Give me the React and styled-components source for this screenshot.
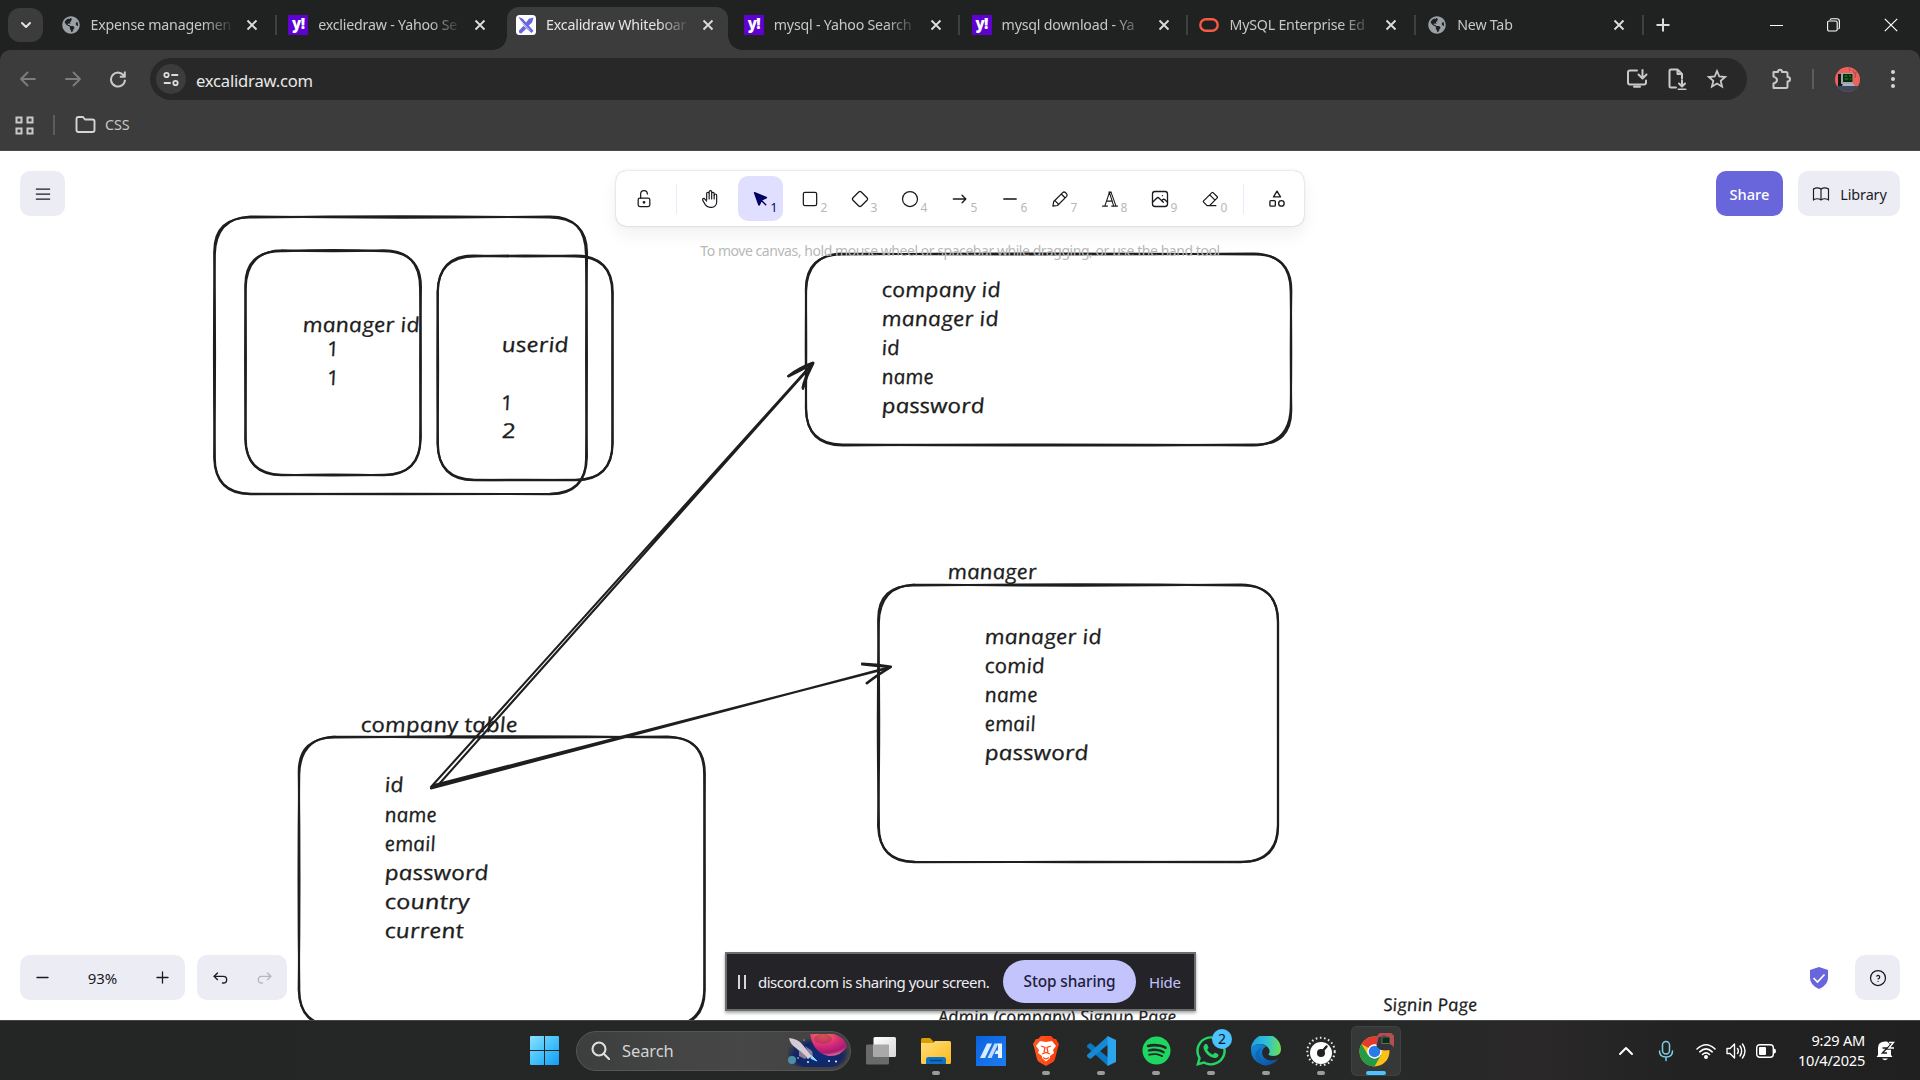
import React from "react";
import styled, { createGlobalStyle, css } from "styled-components";
import { FaGlobeAmericas, FaSpotify, FaWhatsapp } from "react-icons/fa";
import {
  TbLockOpen,
  TbPhoto,
  TbMenu2,
  TbBook,
  TbPlus,
  TbMinus,
  TbArrowBackUp,
  TbArrowForwardUp,
  TbHelpCircle,
} from "react-icons/tb";

const GlobalStyle = createGlobalStyle`
  *, *::before, *::after { box-sizing: border-box; }
  html, body { margin: 0; padding: 0; overflow: hidden; }
  body { font-family: "Noto Sans", "Open Sans", sans-serif; }
  svg { display: block; flex: none; }
`;

const Screen = styled.div`
  width: 1920px;
  height: 1080px;
  display: flex;
  flex-direction: column;
  overflow: hidden;
  background: #fff;
`;

/* ---------- browser chrome ---------- */

const TabStrip = styled.div`
  height: 50px;
  flex: none;
  display: flex;
  align-items: center;
  padding-left: 8px;
  background: #202221;
`;

const TabSearch = styled.div`
  width: 35px;
  height: 34px;
  margin-right: 8.5px;
  border-radius: 12px;
  background: #3c3c3c;
  display: grid;
  place-items: center;
`;

const TabBox = styled.div`
  position: relative;
  width: 220.8px;
  height: 50px;
  padding: 0 8px 0 9px;
  display: flex;
  align-items: center;
  color: ${(p) => (p.$active ? "#e6e6e6" : "#c7c7c7")};
  ${(p) =>
    p.$active &&
    css`
      height: 43px;
      padding-bottom: 7px;
      align-self: flex-end;
      background: #3c3c3c;
      border-radius: 12px 12px 0 0;
      &::before,
      &::after {
        content: "";
        position: absolute;
        bottom: 0;
        width: 14px;
        height: 14px;
      }
      &::before {
        left: -14px;
        background: radial-gradient(circle at 0 0, transparent 13.5px, #3c3c3c 14px);
      }
      &::after {
        right: -14px;
        background: radial-gradient(circle at 100% 0, transparent 13.5px, #3c3c3c 14px);
      }
    `}
`;

const TabTitle = styled.div`
  width: 142px;
  flex: none;
  margin: 0 8px 0 10px;
  white-space: nowrap;
  font-size: 14.2px;
  line-height: 22px;
  letter-spacing: -0.2px;
  mask-image: linear-gradient(90deg, #000 112px, transparent 144px);
`;

const TabClose = styled.div`
  width: 24px;
  height: 24px;
  display: grid;
  place-items: center;
`;

const TabDivider = styled.div`
  width: 2px;
  height: 20px;
  margin: 0 2.5px;
  background: ${(p) => (p.$hidden ? "transparent" : "#3f4040")};
`;

const YahooBadge = styled.div`
  width: 20px;
  height: 20px;
  background: #5f01d1;
  color: #fff;
  font: 800 15px/17px "Open Sans", sans-serif;
  letter-spacing: -0.6px;
  text-align: center;
`;

const NewTab = styled.div`
  width: 30px;
  margin-left: 2px;
  display: grid;
  place-items: center;
`;

const WindowButtons = styled.div`
  margin-left: auto;
  padding-right: 1px;
  display: flex;
  height: 48px;
`;

const WindowButton = styled.div`
  width: 57px;
  display: grid;
  place-items: center;
`;

const BrowserHead = styled.div`
  height: 101px;
  flex: none;
  background: #202221;
`;

const BrowserPanel = styled.div`
  height: 101px;
  padding-top: 8px;
  background: #3c3c3c;
  border-radius: 10px 10px 0 0;
  border-bottom: 1px solid #4a4a4a;
`;

const NavRow = styled.div`
  height: 42px;
  display: flex;
  align-items: center;
  padding-left: 5px;
`;

const NavButton = styled.div`
  width: 45px;
  height: 42px;
  display: grid;
  place-items: center;
`;

const Omnibox = styled.div`
  width: 1597px;
  height: 42px;
  margin-left: 10px;
  padding: 0 10px 0 6px;
  border-radius: 21px;
  background: #282828;
  display: flex;
  align-items: center;
`;

const SiteInfo = styled.div`
  width: 30px;
  height: 30px;
  border-radius: 50%;
  background: #3c3c3c;
  display: grid;
  place-items: center;
`;

const Url = styled.div`
  flex: 1;
  margin-left: 10px;
  padding-top: 2px;
  color: #e8e8e8;
  font-size: 16.6px;
  letter-spacing: -0.2px;
`;

const OmniAction = styled.div`
  width: 40px;
  display: grid;
  place-items: center;
`;

const BarDivider = styled.div`
  width: 2px;
  height: 20px;
  margin-left: ${(p) => p.$gap}px;
  background: #5c5c5c;
`;

const NavTail = styled.div`
  flex: 1;
  display: flex;
  align-items: center;
  padding-left: 22px;
`;

const Avatar = styled.div`
  margin: 0 30px 0 21px;
`;

const Bookmarks = styled.div`
  display: flex;
  align-items: center;
  height: 50px;
  padding-left: 15px;
`;

const Folder = styled.div`
  display: flex;
  align-items: center;
  gap: 9px;
  margin-left: 20px;
  margin-top: -1px;
  color: #c7c7c7;
  font-size: 14.4px;
  letter-spacing: -0.15px;
`;

/* ---------- whiteboard ---------- */

const Board = styled.main`
  position: relative;
  height: 869px;
  flex: none;
  display: flex;
  flex-direction: column;
  justify-content: space-between;
  background: #fff;
  overflow: hidden;
  color: #1b1b1f;
`;

const Drawing = styled.svg`
  position: absolute;
  inset: 0;
`;

const BoardTop = styled.div`
  position: relative;
  display: grid;
  grid-template-columns: 1fr auto 1fr;
  align-items: start;
  padding: 20px;
`;

const BoardBottom = styled.div`
  position: relative;
  display: flex;
  align-items: center;
  padding: 20px;
`;

const SquareButton = styled.div`
  width: 45px;
  height: 45px;
  border-radius: 10px;
  background: #ececf4;
  display: grid;
  place-items: center;
`;

const Centre = styled.div`
  display: flex;
  flex-direction: column;
  align-items: center;
`;

const ToolIsland = styled.div`
  display: flex;
  align-items: center;
  gap: 5px;
  padding: 5px;
  border-radius: 10px;
  background: #fff;
  box-shadow: 0 0 1.2px rgba(0, 0, 0, 0.3), 0 0 4px rgba(0, 0, 0, 0.06), 0 9px 18px rgba(0, 0, 0, 0.06);
`;

const Tool = styled.div`
  width: 45px;
  height: 45px;
  border-radius: 10px;
  display: grid;
  place-items: center;
  position: relative;
  background: ${(p) => (p.$active ? "#e0dfff" : "transparent")};
  color: ${(p) => (p.$active ? "#030064" : "#1b1b1f")};
`;

const ToolKey = styled.span`
  position: absolute;
  right: 5.5px;
  bottom: 6px;
  font-size: 12px;
  line-height: 14px;
  letter-spacing: -0.4px;
  color: ${(p) => (p.$active ? "#030064" : "#b8b8b8")};
`;

const ToolDivider = styled.div`
  width: 1px;
  height: 30px;
  margin: 0 5.25px;
  background: #ebe9fb;
`;

const Hint = styled.div`
  margin-top: 14px;
  font-size: 14px;
  line-height: 22px;
  letter-spacing: -0.45px;
  color: #b8b8b8;
  white-space: nowrap;
`;

const TopActions = styled.div`
  display: flex;
  justify-content: flex-end;
  gap: 15px;
`;

const ShareButton = styled.div`
  width: 67px;
  height: 45px;
  padding-top: 1px;
  border-radius: 10px;
  background: #6965db;
  color: #fff;
  font-size: 14.6px;
  font-weight: 500;
  display: grid;
  place-items: center;
`;

const LibraryButton = styled.div`
  width: 102px;
  height: 45px;
  padding-top: 1px;
  border-radius: 10px;
  background: #ececf4;
  font-size: 14.4px;
  letter-spacing: -0.1px;
  display: flex;
  align-items: center;
  justify-content: center;
  gap: 9px;
`;

const ButtonGroup = styled.div`
  width: ${(p) => p.$width}px;
  height: 45px;
  margin-right: 12px;
  border-radius: 10px;
  background: #ececf4;
  display: flex;
  align-items: center;
  justify-content: space-between;
`;

const GroupCell = styled.div`
  width: 45px;
  display: grid;
  place-items: center;
  opacity: ${(p) => (p.$dim ? 0.25 : 1)};
`;

const ZoomValue = styled.div`
  padding-top: 1px;
  font-size: 15px;
`;

const Shield = styled.div`
  margin: 0 26px 0 auto;
`;

/* Floating window placed over the whiteboard by the browser. */
const ShareBar = styled.div`
  position: absolute;
  left: 725px;
  top: 952px;
  width: 471px;
  height: 59px;
  padding-left: 11px;
  border: 2px solid #6b6d6e;
  background: #232328;
  box-shadow: 0 2px 3px rgba(0, 0, 0, 0.35);
  display: flex;
  align-items: center;
  color: #eeeef2;
  font-size: 15px;
  white-space: nowrap;
`;

const PauseBars = styled.div`
  width: 8px;
  height: 14px;
  margin-right: 12px;
  border: solid #d6d6da;
  border-width: 0 2.5px;
`;

const ShareText = styled.div`
  width: 231px;
  flex: none;
  letter-spacing: -0.5px;
`;

const StopButton = styled.div`
  width: 133px;
  height: 43px;
  flex: none;
  margin: 0 13px 0 14px;
  border-radius: 22px;
  background: #c4c4fd;
  color: #20203a;
  font-size: 15.4px;
  font-weight: 500;
  letter-spacing: -0.1px;
  display: grid;
  place-items: center;
`;

const HideLink = styled.div`
  color: #c4c4fd;
  letter-spacing: -0.2px;
`;

/* ---------- taskbar ---------- */

const Taskbar = styled.footer`
  position: relative;
  height: 60px;
  flex: none;
  display: flex;
  align-items: center;
  padding-left: 530px;
  border-top: 1px solid #434846;
  background: linear-gradient(90deg, #242626 0, #262828 70%, #2a2829 80%, #222 88%, #202020 100%);
`;

const SearchBox = styled.div`
  width: 275px;
  height: 40px;
  margin: 0 2.5px 0 17px;
  padding: 0 2px 0 14px;
  border-radius: 20px;
  border: 1px solid #555756;
  background: linear-gradient(90deg, #3d3f3e, #474747 60%, #414141);
  display: flex;
  align-items: center;
`;

const SearchLabel = styled.div`
  flex: 1;
  margin-left: 12px;
  color: #d4d4d4;
  font-size: 16.5px;
  letter-spacing: -0.1px;
`;

const AppTile = styled.div`
  position: relative;
  width: 50px;
  height: 50px;
  margin: 0 2.5px;
  border-radius: 6px;
  display: grid;
  place-items: center;
  background: ${(p) => (p.$focused ? "#363737" : "transparent")};
  box-shadow: ${(p) => (p.$focused ? "inset 0 0 0 1px #404141" : "none")};
`;

const RunMark = styled.div`
  position: absolute;
  bottom: 1px;
  left: 50%;
  width: ${(p) => (p.$focused ? 20 : 8)}px;
  height: 4px;
  border-radius: 2px;
  transform: translateX(-50%);
  background: ${(p) => (p.$focused ? "#4cc2ff" : "#9b9b9b")};
`;

const CountBadge = styled.div`
  position: absolute;
  right: 4px;
  top: 3px;
  width: 20px;
  height: 20px;
  border-radius: 50%;
  background: #4cc2ff;
  color: #101418;
  font-size: 14px;
  line-height: 20px;
  text-align: center;
`;

const Tray = styled.div`
  margin-left: auto;
  padding-right: 24px;
  display: flex;
  align-items: center;
`;

const TrayIcon = styled.div`
  width: ${(p) => p.$width || 30}px;
  display: grid;
  place-items: center;
`;

const Clock = styled.div`
  width: 79px;
  margin-right: 11px;
  text-align: right;
  color: #fff;
  font-size: 14.6px;
  line-height: 20px;
  letter-spacing: -0.25px;
  margin-top: -2px;
`;

/* ---------- small icons ---------- */

const Line = ({ size = 20, box = 24, w = 1.5, color = "currentColor", children }) => (
  <svg
    width={size}
    height={size}
    viewBox={`0 0 ${box} ${box}`}
    fill="none"
    stroke={color}
    strokeWidth={w}
    strokeLinecap="round"
    strokeLinejoin="round"
  >
    {children}
  </svg>
);

const CloseGlyph = () => (
  <svg width="12" height="12" viewBox="0 0 12 12" stroke="#dcdcdc" strokeWidth="1.9">
    <path d="M1.5 1.5l9 9M10.5 1.5l-9 9" />
  </svg>
);

const ExcalidrawIcon = () => (
  <svg width="20" height="20" viewBox="0 0 20 20">
    <rect width="20" height="20" rx="3.5" fill="#fff" />
    <path d="M2.5 2l4 1.5 11 12.2-2 2.4-5-4.6-4-5.3z" fill="#6965db" />
    <path d="M17.5 2.6l-4.6 1.2-3 4 2.6 3 3.6-3.4z M7.6 10.8l-4.7 5 .4 2.2 2 .4 4.8-4.6z" fill="#6965db" />
    <path d="M5 6l9 9.5" stroke="#fff" strokeWidth=".7" />
  </svg>
);

const OracleIcon = () => (
  <svg width="20" height="20" viewBox="0 0 20 20">
    <rect x="1.3" y="4.3" width="17.4" height="11.4" rx="5.7" fill="none" stroke="#f55a42" strokeWidth="2.4" />
  </svg>
);

const GlobeIcon = styled(FaGlobeAmericas)`
  width: 18px;
  height: 18px;
  margin: 0 1px;
  color: #9aa0a6;
`;

const favicons = {
  globe: <GlobeIcon />,
  yahoo: <YahooBadge>y!</YahooBadge>,
  excalidraw: <ExcalidrawIcon />,
  oracle: <OracleIcon />,
};

const tabs = [
  { icon: "globe", title: "Expense managemen" },
  { icon: "yahoo", title: "excliedraw - Yahoo Se" },
  { icon: "excalidraw", title: "Excalidraw Whiteboar", active: true },
  { icon: "yahoo", title: "mysql - Yahoo Search" },
  { icon: "yahoo", title: "mysql download - Ya" },
  { icon: "oracle", title: "MySQL Enterprise Ed" },
  { icon: "globe", title: "New Tab" },
];

function Browser() {
  const grey = "#c9c9c9";
  return (
    <>
      <TabStrip>
        <TabSearch>
          <Line size={14} box={14} w={2} color="#e3e3e3">
            <path d="M3 5l4 4 4-4" />
          </Line>
        </TabSearch>
        {tabs.map((tab, i) => (
          <React.Fragment key={tab.title}>
            <TabBox $active={tab.active}>
              {favicons[tab.icon]}
              <TabTitle>{tab.title}</TabTitle>
              <TabClose>
                <CloseGlyph />
              </TabClose>
            </TabBox>
            <TabDivider $hidden={tab.active || (tabs[i + 1] && tabs[i + 1].active)} />
          </React.Fragment>
        ))}
        <NewTab>
          <svg width="14" height="14" viewBox="0 0 14 14" stroke="#dcdcdc" strokeWidth="2">
            <path d="M7 .5v13M.5 7h13" />
          </svg>
        </NewTab>
        <WindowButtons>
          <WindowButton>
            <svg width="13" height="13" viewBox="0 0 13 13" stroke="#fff">
              <path d="M0 6.5h13" />
            </svg>
          </WindowButton>
          <WindowButton>
            <svg width="13" height="14" viewBox="0 0 13 14" fill="none" stroke="#fff" strokeWidth="1.1">
              <rect x=".6" y="3" width="9.6" height="10" rx="1.5" />
              <path d="M3 1.8Q3.5.8 5 .8h5q2.4 0 2.4 2.4v6q0 1.4-1 1.8" />
            </svg>
          </WindowButton>
          <WindowButton>
            <svg width="14" height="14" viewBox="0 0 14 14" stroke="#fff" strokeWidth="1.2">
              <path d="M.8.8l12.4 12.4M13.2.8l-12.4 12.4" />
            </svg>
          </WindowButton>
        </WindowButtons>
      </TabStrip>
      <BrowserHead>
        <BrowserPanel>
          <NavRow>
            <NavButton>
              <Line size={16} box={16} w={1.8} color="#7d7d7d">
                <path d="M15 8H1.5M7.5 1.5L1 8l6.5 6.5" />
              </Line>
            </NavButton>
            <NavButton>
              <Line size={16} box={16} w={1.8} color="#7d7d7d">
                <path d="M1 8h13.5M8.5 1.5L15 8l-6.5 6.5" />
              </Line>
            </NavButton>
            <NavButton>
              <Line size={18} box={18} w={2} color={grey}>
                <path d="M15.3 6.5A7 7 0 1 0 16 9.8M15.8 1.5v5.2h-5" strokeLinecap="butt" />
              </Line>
            </NavButton>
            <Omnibox>
              <SiteInfo>
                <Line size={16} box={16} w={1.8} color="#dcdcdc">
                  <circle cx="3.5" cy="4" r="2.2" />
                  <path d="M9 4h5.5M1.5 12h5.5" />
                  <circle cx="12.5" cy="12" r="2.2" />
                </Line>
              </SiteInfo>
              <Url>excalidraw.com</Url>
              <OmniAction>
                <Line size={22} box={22} w={2} color={grey}>
                  <path d="M11 2.5H4q-2 0-2 2v10q0 2 2 2h14q2 0 2-2v-2M16.5 2v8M12.5 6.5l4 4 4-4M8 18.7h6" />
                </Line>
              </OmniAction>
              <OmniAction>
                <Line size={22} box={22} w={2} color={grey}>
                  <path d="M10 19.5H5q-1.5 0-1.5-1.5V3q0-1.5 1.5-1.5h6.5l4.5 4.5v4.5M11.5 1.5v4.5h4.5M16 12.5v5M13 15.5l3 3 3-3M12.5 21.5h7" />
                </Line>
              </OmniAction>
              <OmniAction>
                <Line size={22} box={22} w={1.8} color={grey}>
                  <path
                    strokeLinejoin="miter"
                    d="M11 3l2.3 5.5 5.9.5-4.5 3.9 1.4 5.8L11 15.6l-5.1 3.1 1.4-5.8L2.8 9l5.9-.5z"
                  />
                </Line>
              </OmniAction>
            </Omnibox>
            <NavTail>
              <Line size={24} box={24} w={2} color={grey}>
                <path d="M4.5 5H9q0-2.3 2-2.3T13 5h4q1.5 0 1.5 1.5V10q2.5 0 2.5 2.2t-2.5 2.2v5q0 1.5-1.5 1.500H4.500v-4.500Q8 15.500 8 13T4.500 9.600z" />
              </Line>
              <BarDivider $gap={19} />
              <Avatar>
                <svg width="25" height="25" viewBox="0 0 25 25">
                  <clipPath id="avatar">
                    <circle cx="12.5" cy="12.5" r="12.5" />
                  </clipPath>
                  <g clipPath="url(#avatar)">
                    <rect width="25" height="25" fill="#ee625c" />
                    <path d="M18 3l2 4M21 5l-1 6M14 1l1 3" stroke="#b34545" />
                    <rect y="19" width="25" height="6" fill="#3e465c" />
                    <rect x="3" y="7" width="6" height="12" fill="#161718" />
                    <rect x="6" y="6" width="12" height="11" fill="#9aa1b0" />
                    <rect x="8" y="7" width="9.500" height="8" fill="#062c08" />
                    <path d="M9.500 9h3M14 9h2M9.500 12h4M15 12h1.500" stroke="#2d8a2d" />
                    <path d="M8 16.500h10l2 2.500H7z" fill="#aab0bf" />
                  </g>
                </svg>
              </Avatar>
              <svg width="6" height="20" viewBox="0 0 6 20" fill="#d5d5d5">
                <circle cx="3" cy="3" r="2" />
                <circle cx="3" cy="10" r="2" />
                <circle cx="3" cy="17" r="2" />
              </svg>
            </NavTail>
          </NavRow>
          <Bookmarks>
            <svg width="19" height="19" viewBox="0 0 19 19" fill="none" stroke="#c9c9c9" strokeWidth="2">
              <path d="M1.5 1.5h5v5h-5zM12.5 1.5h5v5h-5zM1.5 12.5h5v5h-5zM12.5 12.5h5v5h-5z" />
            </svg>
            <BarDivider $gap={19} />
            <Folder>
              <Line size={21} box={21} w={1.9} color="#d5d5d5">
                <path d="M1.5 5q0-2 2-2h4.5l2 2.5h7.5q2 0 2 2v8.500q0 2-2 2h-14q-2 0-2-2z" />
              </Line>
              CSS
            </Folder>
          </Bookmarks>
        </BrowserPanel>
      </BrowserHead>
    </>
  );
}

/* ---------- hand drawn shapes, in page coordinates ---------- */

const boxes = [
  { l: 214.5, t: 217, r: 586.5, b: 494, j: [0.9, -0.9, 0.3, -0.7] },
  { l: 245.5, t: 250.7, r: 420.5, b: 475, j: [-0.8, 0.7, -0.6, 0.5] },
  { l: 437.7, t: 256, r: 612.5, b: 480, j: [0.6, -0.4, 0.3, 0.5] },
  { l: 806, t: 254, r: 1291, b: 445, j: [-0.8, -0.5, -0.8, 0.3] },
  { l: 878.5, t: 585, r: 1278, b: 862, j: [0.9, 0.2, 0.3, -0.9] },
  { l: 299, t: 737, r: 704.5, b: 1026, j: [0.9, 0.5, 0.4, -0.6] },
];

function sketchPath({ l, t, r, b, j }, side) {
  const q = 37;
  const [a, c, d, e] = j.map((v) => v * side * 1.2);
  const mx = (l + r) / 2;
  const my = (t + b) / 2;
  return [
    `M${l + q - a} ${t - a * 0.5}`,
    `Q${mx} ${t + a * 1.6} ${r - q} ${t - a * 0.5}`,
    `Q${r + c * 0.6} ${t + c} ${r + c * 0.5} ${t + q - c}`,
    `Q${r - c * 1.2} ${my} ${r + c * 0.4} ${b - q + d}`,
    `Q${r + d} ${b + c} ${r - q + d} ${b - d * 0.4}`,
    `Q${mx} ${b + d * 1.4} ${l + q - d} ${b - d * 0.4}`,
    `Q${l + e} ${b - a} ${l - e * 0.4} ${b - q + e}`,
    `Q${l + e * 1.6} ${my} ${l - e * 0.3} ${t + q - e}`,
    `Q${l + a} ${t - e} ${l + q - a} ${t - a * 0.5}`,
  ].join(" ");
}

const notes = [
  ["manager id", 303.5, 332, 117],
  ["1", 328, 355.5, 0],
  ["1", 328, 384.5, 0],
  ["userid", 502.5, 352, 67],
  ["1", 502, 409.5, 0],
  ["2", 502.5, 438, 14],
  ["company id", 882.5, 296.5, 119],
  ["manager id", 882.5, 325.5, 117],
  ["id", 882.5, 354.5, 18],
  ["name", 882.5, 384, 52],
  ["password", 882.5, 412.5, 103],
  ["manager", 948.5, 579, 89],
  ["manager id", 985.5, 643.5, 117],
  ["comid", 985.5, 672.5, 60],
  ["name", 985.5, 702, 53],
  ["email", 985.5, 731, 51],
  ["password", 985.5, 759.5, 104],
  ["company table", 361.5, 731.5, 157],
  ["id", 385.5, 792, 19],
  ["name", 385.5, 821.5, 52],
  ["email", 385.5, 850.5, 51],
  ["password", 385.5, 879.5, 104],
  ["country", 385.5, 908.5, 85],
  ["current", 385.5, 937.5, 79],
  ["Admin (company) Signup Page", 939, 1023, 238, 17.5],
  ["Signin Page", 1384, 1010.5, 94, 17.5],
];

/* Italic letters set upright again: their one-storey "a" and open "y" read as handwriting. */
function BoardDrawing() {
  return (
    <Drawing width="1920" height="869" viewBox="0 151 1920 869">
      <g fill="none" stroke="#1e1e1e" strokeWidth="2.1" strokeLinecap="round" strokeLinejoin="round">
        {boxes.map((box) => (
          <React.Fragment key={box.l}>
            <path d={sketchPath(box, 1)} />
            <path d={sketchPath(box, -1)} />
          </React.Fragment>
        ))}
        <path d="M431 787L813 363M440 783C560 650 700 489 812.500 364.500" />
        <path d="M813 362.500Q800 367 788 376M813.500 363Q802 370 788.500 376.500M813.500 363Q807 375 803 389M813 364Q804 378 802.500 388" />
        <path d="M431 788.500Q650 730 890 667M434 785Q650 729.500 889 668M433 786.500L640 732.500" />
        <path d="M891 666.500Q876 664 862 663.500M890 667Q876 666 862 664.500M891 667Q876 676 867 683.500M890 667.500Q880 673 866.500 683" />
      </g>
      <g
        fill="#1e1e1e"
        stroke="#1e1e1e"
        strokeWidth=".25"
        fontFamily='"Open Sans", "Noto Sans", sans-serif'
        fontStyle="italic"
      >
        {notes.map(([text, x, y, width, size]) => (
          <text
            key={`${text}${x}${y}`}
            transform={`translate(${x} ${y}) skewX(9)`}
            fontSize={size || 20.5}
            textLength={width || undefined}
            lengthAdjust="spacingAndGlyphs"
          >
            {text}
          </text>
        ))}
      </g>
    </Drawing>
  );
}

const tools = [
  {
    icon: (
      <Line w={1.4}>
        <path d="M8 13V5.5a1.5 1.5 0 0 1 3 0V12M11 5.5v-2a1.5 1.5 0 1 1 3 0V12M14 5.5a1.5 1.5 0 0 1 3 0V12" />
        <path d="M17 7.5a1.5 1.5 0 0 1 3 0V16a6 6 0 0 1-6 6h-2c-2.8 0-4-.6-5.5-2.9L3.3 13.6a1.5 1.5 0 0 1 2.6-1.5L8 14.5" />
      </Line>
    ),
  },
  {
    key: "1",
    active: true,
    icon: (
      <svg width="20" height="20" viewBox="0 0 22 22" fill="currentColor" stroke="currentColor" strokeLinecap="round" strokeLinejoin="round">
        <path d="M5 4l4.700 13.200q.3.600.6 0L12.600 12l5.200-2.200q.5-.3 0-.6zM12.500 12.500l4.800 4.800" strokeWidth="1.600" />
      </svg>
    ),
  },
  { key: "2", icon: <Line><rect x="4" y="4" width="16" height="16" rx="2" /></Line> },
  { key: "3", icon: <Line><path d="M10.5 3.6L3.6 10.5q-1.500 1.500 0 3l6.900 6.900q1.500 1.500 3 0l6.900-6.900q1.500-1.500 0-3L13.500 3.600q-1.500-1.500-3 0z" /></Line> },
  { key: "4", icon: <Line><circle cx="12" cy="12" r="9" /></Line> },
  { key: "5", icon: <Line w={1.6}><path d="M4 12h15M14.500 7.500L19 12l-4.500 4.500" /></Line> },
  { key: "6", icon: <Line w={1.9}><path d="M4 12h16" strokeLinecap="butt" /></Line> },
  { key: "7", icon: <Line><path d="M9 19.800L20 8.800q1.300-1.400-.2-3.200l-1.400-1.400q-1.600-1.300-3.200.2L4.500 15 3.500 20.500zM13.500 6l4.500 4.500M6 14l3.500 3.500" /></Line> },
  {
    key: "8",
    icon: (
      <Line w={1.3}>
        <path d="M3 20.500h6M14 20.500h7M6 20L11.300 4h2L19 20M8 14.500h7M11.300 4l5 16M10.500 3.500h3" />
      </Line>
    ),
  },
  { key: "9", icon: <TbPhoto size={20} strokeWidth={1.6} /> },
  {
    key: "0",
    icon: (
      <Line>
        <path d="M19 20H8.500l-4.200-4.300a1 1 0 0 1 0-1.400l10-10a1 1 0 0 1 1.400 0l5 5a1 1 0 0 1 0 1.400L11.500 20M18 13.300L11.700 7" />
      </Line>
    ),
  },
];

function Whiteboard() {
  return (
    <Board>
      <BoardDrawing />
      <BoardTop>
        <SquareButton>
          <TbMenu2 size={20} strokeWidth={1.5} />
        </SquareButton>
        <Centre>
          <ToolIsland>
            <Tool>
              <TbLockOpen size={20} strokeWidth={1.5} />
            </Tool>
            <ToolDivider />
            {tools.map((tool, i) => (
              <Tool key={i} $active={tool.active}>
                {tool.icon}
                {tool.key && <ToolKey $active={tool.active}>{tool.key}</ToolKey>}
              </Tool>
            ))}
            <ToolDivider />
            <Tool>
              <Line w={1.6}>
                <path d="M12 2.500l4.200 7H7.800z" />
                <rect x="3.500" y="14" width="6.500" height="6.500" rx="1" />
                <circle cx="17.300" cy="17.300" r="3.300" />
              </Line>
            </Tool>
          </ToolIsland>
          <Hint>To move canvas, hold mouse wheel or spacebar while dragging, or use the hand tool</Hint>
        </Centre>
        <TopActions>
          <ShareButton>Share</ShareButton>
          <LibraryButton>
            <TbBook size={20} strokeWidth={1.4} />
            Library
          </LibraryButton>
        </TopActions>
      </BoardTop>
      <BoardBottom>
        <ButtonGroup $width={165}>
          <GroupCell>
            <TbMinus size={19} strokeWidth={1.6} />
          </GroupCell>
          <ZoomValue>93%</ZoomValue>
          <GroupCell>
            <TbPlus size={19} strokeWidth={1.6} />
          </GroupCell>
        </ButtonGroup>
        <ButtonGroup $width={90}>
          <GroupCell>
            <TbArrowBackUp size={20} strokeWidth={1.6} />
          </GroupCell>
          <GroupCell $dim>
            <TbArrowForwardUp size={20} strokeWidth={1.6} />
          </GroupCell>
        </ButtonGroup>
        <Shield>
          <svg width="20" height="24" viewBox="0 0 20 24">
            <path d="M10 1l9 3v8q0 7-9 11Q1 19 1 12V4z" fill="#6965db" />
            <path d="M4.500 12l4 4 7-7.500" fill="none" stroke="#fff" strokeWidth="1.700" />
          </svg>
        </Shield>
        <SquareButton>
          <TbHelpCircle size={20} strokeWidth={1.5} />
        </SquareButton>
      </BoardBottom>
    </Board>
  );
}

/* ---------- taskbar pictures ---------- */

const StartIcon = () => (
  <svg width="29" height="29" viewBox="0 0 29 29">
    <linearGradient id="start" x1="0" y1="0" x2="1" y2="1">
      <stop offset="0" stopColor="#8be0fd" />
      <stop offset=".5" stopColor="#45c3fb" />
      <stop offset="1" stopColor="#129bf8" />
    </linearGradient>
    <path d="M1 0h13v14H0V1q0-1 1-1zM15 0h13q1 0 1 1v13H15zM0 15h14v14H1q-1 0-1-1zM15 15h14v13q0 1-1 1H15z" fill="url(#start)" />
  </svg>
);

const SpaceArt = () => (
  <svg width="60" height="34" viewBox="0 0 60 34">
    <defs>
      <radialGradient id="sky" cx=".5" cy=".65" r=".55">
        <stop offset="0" stopColor="#0b2c7c" />
        <stop offset=".7" stopColor="#132663" />
        <stop offset="1" stopColor="#132663" stopOpacity="0" />
      </radialGradient>
      <radialGradient id="planet" cx=".35" cy=".1" r=".95">
        <stop offset="0" stopColor="#f58350" />
        <stop offset=".45" stopColor="#d92d78" />
        <stop offset=".8" stopColor="#a81a72" />
        <stop offset="1" stopColor="#f07a9b" />
      </radialGradient>
    </defs>
    <path d="M0 8Q20-4 46 2l14 14q-2 17-16 17H14Q0 32 0 20z" fill="url(#sky)" />
    <path d="M22 0h24q10 3 13 12Q54 22 41 22 25 19 22 0z" fill="url(#planet)" />
    <ellipse cx="35" cy="5" rx="9" ry="5" fill="#9f1d55" opacity=".45" />
    <path d="M1 4q9 1 13 6l10 12-4 3L8 14Q2 10 1 4z" fill="#d5cbd6" />
    <path d="M11 16l8 7-2 2-6-3zM17 12l7 5 1 5-4-3z" fill="#8e7f96" />
    <path d="M23 21l6 6-6-2.500z" fill="#8fd8ff" stroke="#8fd8ff" />
    <circle cx="4" cy="26" r="4" fill="#4e8fa8" />
    <g fill="#fff">
      <circle cx="20" cy="28" r=".9" />
      <circle cx="41" cy="27" r=".9" />
      <circle cx="48" cy="27.500" r="1" />
      <circle cx="10" cy="24" r=".7" />
      <circle cx="16" cy="6" r=".6" />
    </g>
  </svg>
);

const TaskViewIcon = () => (
  <svg width="30" height="30" viewBox="0 0 30 30">
    <linearGradient id="tv" x1="0" y1="0" x2="1" y2="1">
      <stop offset="0" stopColor="#fff" />
      <stop offset="1" stopColor="#d7d7d7" />
    </linearGradient>
    <rect x="0" y="8.500" width="23" height="20" rx="1.500" fill="#6a6a6a" />
    <rect x="7.500" y="1" width="22.500" height="20" rx="1.500" fill="url(#tv)" />
    <rect x="7.500" y="8.500" width="15.500" height="12.500" fill="#a9a9a9" />
  </svg>
);

const ExplorerIcon = () => (
  <svg width="30" height="30" viewBox="0 0 30 30">
    <linearGradient id="fold" x1="0" y1="0" x2="1" y2="1">
      <stop offset="0" stopColor="#ffe07a" />
      <stop offset="1" stopColor="#fbb81c" />
    </linearGradient>
    <path d="M0 3.500Q0 2 1.500 2H9l3.500 3.500V12H0z" fill="#dd9c05" />
    <path d="M0 7h12l2-2h14.500Q30 5 30 6.500v20q0 1.500-1.500 1.500h-27Q0 28 0 26.500z" fill="url(#fold)" />
    <path d="M5 28v-4.500Q5 21 7.500 21h15q2.500 0 2.500 2.500V28z" fill="#0c72c6" />
    <path d="M9 24.500h12" stroke="#06457f" strokeWidth="1.500" />
  </svg>
);

const BlueAppIcon = () => (
  <svg width="30" height="30" viewBox="0 0 30 30">
    <linearGradient id="blueApp" x1="0" y1="0" x2="1" y2="1">
      <stop offset="0" stopColor="#0a63de" />
      <stop offset="1" stopColor="#1d7cf0" />
    </linearGradient>
    <rect width="30" height="30" fill="url(#blueApp)" />
    <path d="M4 22L11 7.500h5L9 22z" fill="#dcecff" />
    <path d="M11.500 22L18.500 7.500h4L15.500 22z" fill="#c3dcfb" />
    <path d="M22 7.500h4V22h-4v-4h-3.500l1.800-3.500H22z" fill="#eaf3ff" />
  </svg>
);

const BraveIcon = () => (
  <svg width="26" height="30" viewBox="0 0 26 30">
    <linearGradient id="brave" x1="0" x2="1">
      <stop offset="0" stopColor="#ff5a1f" />
      <stop offset="1" stopColor="#ff3a0a" />
    </linearGradient>
    <path d="M8 0h10l3 3h2l3 5-1 3-3 12q-.5 2-2 3l-7 4-7-4q-1.500-1-2-3L1 11 0 8l3-5h2z" fill="url(#brave)" />
    <path d="M7 5l6 1 6-1 4 5-3 4 1 3-4 3v2l-4 3.500-4-3.500v-2l-4-3 1-3-3-4z" fill="#fff" />
    <path d="M8 10l4 1.500-1 5M18 10l-4 1.500 1 5M9 18l4-1.500 4 1.500M10 21.500l3 1.500 3-1.500" fill="none" stroke="#ff4a14" strokeWidth="1.300" />
  </svg>
);

const CodeIcon = () => (
  <svg width="30" height="30" viewBox="0 0 30 30">
    <path d="M2 8.500l2.500-1.500L22 21.500V30L1 11q-.5-1 1-2.500z" fill="#0a78c2" />
    <path d="M2 21.500L4.500 23 22 8.500V0L1 19q-.5 1 1 2.500z" fill="#1689d4" />
    <path d="M21.500 0L30 4v22l-8.500 4z" fill="#2ba4ee" />
  </svg>
);

const EdgeIcon = () => (
  <svg width="30" height="30" viewBox="0 0 30 30">
    <defs>
      <linearGradient id="edgeTop" x1="0" y1=".4" x2="1" y2=".5">
        <stop offset="0" stopColor="#1d9fe4" />
        <stop offset=".55" stopColor="#33c3cf" />
        <stop offset="1" stopColor="#6adf52" />
      </linearGradient>
      <linearGradient id="edgeLow" x1="0" y1="0" x2="1" y2="1">
        <stop offset="0" stopColor="#1290e0" />
        <stop offset="1" stopColor="#0b4a99" />
      </linearGradient>
    </defs>
    <path d="M0 14A15 15 0 0 1 30 13q0 7-7.500 7-5 0-5-2 2-2 .5-5Q15 8 9 8 2 8 0 14z" fill="url(#edgeTop)" />
    <path d="M0 14q2-6 9-6 4 0 6.500 2.500Q11 12 11 17q1 7 9 7.500 4 0 7.500-2A15 15 0 0 1 0 14z" fill="url(#edgeLow)" />
    <path d="M11 12q-4 4-2 10 2 6 8 8-8-.5-12-7-2-9 6-11z" fill="#0f5fae" opacity=".7" />
  </svg>
);

const DialIcon = () => (
  <svg width="30" height="30" viewBox="0 0 30 30">
    <circle cx="15" cy="15.500" r="13.700" fill="none" stroke="#e6e6e6" strokeWidth="2" strokeDasharray="1.600 2.600" />
    <circle cx="15" cy="17" r="11" fill="#fff" />
    <circle cx="15" cy="17" r="4" fill="#222" />
    <path d="M15 17l5.500-6.500" stroke="#222" strokeWidth="2.500" strokeLinecap="round" />
  </svg>
);

const ChromeIcon = () => (
  <svg width="36" height="36" viewBox="-16.500 -18.500 36 36">
    <circle r="15" fill="#fbc116" />
    <path d="M0 0L-13 -7.500A15 15 0 0 1 13-7.500L13-7H0z" fill="#e33b2e" />
    <path d="M-13-7.500A15 15 0 0 0 0 15L6.500 3.500 0 0-6.500 3.500z" fill="#229a48" />
    <circle r="7.200" fill="#fff" />
    <circle r="5.800" fill="#2a7bea" />
    <circle cx="11" cy="-10.500" r="9.800" fill="#b94c4c" />
    <path d="M2-5l2-9 5-2 5 1 2 8 3 2-3 3.500H6z" fill="#33343a" />
    <rect x="7.500" y="-14.500" width="8" height="6.500" fill="#0d2c12" stroke="#777" strokeWidth=".8" />
  </svg>
);

const apps = [
  { name: "taskview", icon: <TaskViewIcon /> },
  { name: "explorer", icon: <ExplorerIcon />, running: true },
  { name: "blue", icon: <BlueAppIcon /> },
  { name: "brave", icon: <BraveIcon />, running: true },
  { name: "code", icon: <CodeIcon />, running: true },
  { name: "spotify", icon: <FaSpotify size={29} color="#1ed760" />, running: true },
  { name: "whatsapp", icon: <FaWhatsapp size={34} color="#25d366" />, running: true, count: 2 },
  { name: "edge", icon: <EdgeIcon />, running: true },
  { name: "dial", icon: <DialIcon />, running: true },
  { name: "chrome", icon: <ChromeIcon />, running: true, focused: true },
];

function WindowsTaskbar() {
  return (
    <Taskbar>
      <StartIcon />
      <SearchBox>
        <Line size={19} box={19} w={2.1} color="#dedede">
          <circle cx="8" cy="8" r="6.500" />
          <path d="M13 13l5 5" />
        </Line>
        <SearchLabel>Search</SearchLabel>
        <SpaceArt />
      </SearchBox>
      {apps.map((app) => (
        <AppTile key={app.name} $focused={app.focused}>
          {app.icon}
          {app.count && <CountBadge>{app.count}</CountBadge>}
          {app.running && <RunMark $focused={app.focused} />}
        </AppTile>
      ))}
      <Tray>
        <TrayIcon $width={40}>
          <Line size={16} box={16} w={2} color="#fff">
            <path d="M2 11l6-6 6 6" />
          </Line>
        </TrayIcon>
        <TrayIcon $width={40}>
          <Line size={22} box={22} w={1.5} color="#7ccfe4">
            <rect x="7.500" y="1.500" width="7" height="12.500" rx="3.500" />
            <path d="M4.500 11q0 6 6.500 6t6.500-6M11 17v3.500" />
          </Line>
        </TrayIcon>
        <TrayIcon $width={40}>
          <Line size={20} box={20} w={1.6} color="#fff">
            <path d="M1 8q9-8.500 18 0M3.800 10.800q6.200-5.800 12.400 0M6.500 13.500q3.500-3.200 7 0" />
            <circle cx="10" cy="16" r="1.200" fill="#fff" />
          </Line>
        </TrayIcon>
        <TrayIcon $width={20}>
          <Line size={20} box={20} w={1.4} color="#fff">
            <path d="M1 7.500h3L8.500 3v14L4 12.500H1zM11.500 7.500q1.700 2.500 0 5M14 5q3.300 5 0 10M16.500 3q5 7 0 14" />
          </Line>
        </TrayIcon>
        <TrayIcon $width={40}>
          <svg width="20" height="14" viewBox="0 0 20 14">
            <rect x=".7" y=".7" width="16.600" height="12.600" rx="3" fill="none" stroke="#fff" strokeWidth="1.400" />
            <rect x="3" y="3" width="7" height="8" rx="1" fill="#fff" />
            <path d="M18 4.500q2 0 2 2.500t-2 2.500z" fill="#fff" />
          </svg>
        </TrayIcon>
        <Clock>
          9:29 AM
          <br />
          10/4/2025
        </Clock>
        <svg width="20" height="21" viewBox="0 0 20 21">
          <path d="M2 15V8q0-6.500 7-6.500h2L15 5v10l1.500 2H.500zM6 18.500h6q-3 3.500-6 0z" fill="#fff" />
          <path d="M6.500 8h4.500l-4.500 5h4.500" fill="none" stroke="#222" strokeWidth="1.500" />
          <path d="M13 2.500h5l-5 5.500h5" fill="none" stroke="#222" strokeWidth="3.500" />
          <path d="M13 2.500h4.500l-4.500 5.500h5" fill="none" stroke="#fff" strokeWidth="1.400" />
        </svg>
      </Tray>
    </Taskbar>
  );
}

export default function App() {
  return (
    <Screen>
      <GlobalStyle />
      <Browser />
      <Whiteboard />
      <WindowsTaskbar />
      <ShareBar>
        <PauseBars />
        <ShareText>discord.com is sharing your screen.</ShareText>
        <StopButton>Stop sharing</StopButton>
        <HideLink>Hide</HideLink>
      </ShareBar>
    </Screen>
  );
}
